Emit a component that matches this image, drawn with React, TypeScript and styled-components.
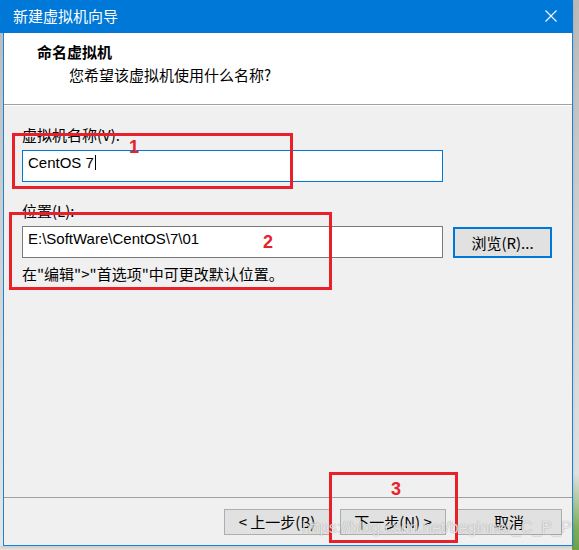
import React from "react";
import styled, { createGlobalStyle } from "styled-components";

// ------------------------------------------------
// Style
// ------------------------------------------------

const Global = createGlobalStyle`
  body {
    margin: 0;
    font-family: "Noto Sans CJK SC", "Liberation Sans", sans-serif;
  }
`;

const Page = styled.div`
  position: relative;
  width: 579px;
  height: 550px;
  overflow: hidden;
  background:
    linear-gradient(to bottom, transparent 0%, transparent 86%, #7fae5a 96%, #6da249 100%) right / 7px 100% no-repeat,
    linear-gradient(to bottom, #b9b9b9 0%, #cfcfcf 40%, #e6e6e6 100%);
`;

const Window = styled.div`
  width: 573px;
  height: 546px;
  display: flex;
  flex-direction: column;
  box-shadow: 0 2px 3px rgba(0, 0, 0, 0.12);
`;

const TitleBar = styled.div`
  height: 33px;
  flex: none;
  display: flex;
  align-items: center;
  justify-content: space-between;
  padding: 0 16px 2px 13px;
  box-sizing: border-box;
  background: #0078d7;
  color: #fff;
  font-size: 15px;
  line-height: 20px;
`;

const Frame = styled.div`
  flex: 1;
  display: flex;
  flex-direction: column;
  margin-left: 3px;
  border: 1px solid #1883d7;
  border-top: none;
  background: #f0f0f0;
`;

const Header = styled.div`
  height: 72px;
  flex: none;
  box-sizing: border-box;
  padding: 9px 0 0 33px;
  background: #fff;
  border-bottom: 1px solid #a0a0a0;
`;

const HeaderTitle = styled.div`
  font-size: 15px;
  line-height: 20px;
  font-weight: 700;
  color: #000;
`;

const HeaderSub = styled.div`
  margin: 3px 0 0 32px;
  font-size: 15px;
  line-height: 20px;
  color: #000;
`;

const Content = styled.div`
  flex: 1;
  padding: 19px 0 0 18px;
  border-top: 1px solid #fff;
`;

const Label = styled.div<{ $gap?: number }>`
  margin-top: ${(p) => p.$gap ?? 0}px;
  margin-bottom: 5px;
  font-size: 15px;
  line-height: 20px;
  color: #000;
`;

const Row = styled.div`
  display: flex;
  align-items: flex-start;
  gap: 10px;
`;

const TextBox = styled.div<{ $focused?: boolean }>`
  width: 421px;
  height: 32px;
  box-sizing: border-box;
  padding: 2px 5px 0;
  display: flex;
  align-items: flex-start;
  background: #fff;
  border: 1px solid ${(p) => (p.$focused ? "#0078d7" : "#7a7a7a")};
  font-family: "Liberation Sans", sans-serif;
  font-size: 15px;
  line-height: 20px;
  color: #000;
`;

const Caret = styled.span`
  width: 1px;
  height: 15px;
  margin: 2px 0 0 1px;
  background: #000;
`;

const Browse = styled.button`
  width: 99px;
  height: 31px;
  margin-top: 1px;
  padding: 0;
  background: #e1e1e1;
  border: 2px solid #0078d7;
  font-family: "Noto Sans CJK SC", "Liberation Sans", sans-serif;
  font-size: 15px;
  line-height: 20px;
  color: #000;
`;

const Hint = styled.div`
  margin-top: 6px;
  font-size: 15px;
  line-height: 20px;
  color: #000;
`;

const Footer = styled.div`
  flex: none;
  display: flex;
  justify-content: flex-end;
  gap: 10px;
  padding: 11px 10px 10px;
  border-top: 1px solid #a0a0a0;
`;

const WizButton = styled.button`
  width: 106px;
  height: 26px;
  padding: 0;
  background: #e1e1e1;
  border: 1px solid #adadad;
  font-family: "Noto Sans CJK SC", "Liberation Sans", sans-serif;
  font-size: 15px;
  line-height: 20px;
  color: #000;
`;

// annotation overlays drawn on top of the screenshot
const Mark = styled.div<{ $x: number; $y: number; $w: number; $h: number }>`
  position: absolute;
  left: ${(p) => p.$x}px;
  top: ${(p) => p.$y}px;
  width: ${(p) => p.$w}px;
  height: ${(p) => p.$h}px;
  box-sizing: border-box;
  border: 3px solid #e8202a;
  pointer-events: none;
`;

const MarkNum = styled.div<{ $x: number; $y: number }>`
  position: absolute;
  left: ${(p) => p.$x}px;
  top: ${(p) => p.$y}px;
  transform: translate(-50%, -50%);
  font-family: "Liberation Sans", sans-serif;
  font-weight: 700;
  font-size: 18px;
  line-height: 18px;
  color: #e8202a;
`;

const Watermark = styled.div`
  position: absolute;
  left: 302px;
  top: 518px;
  font-family: "Liberation Sans", sans-serif;
  font-size: 16px;
  line-height: 20px;
  color: rgba(255, 255, 255, 0.8);
  text-shadow: 0 0 1px rgba(0, 0, 0, 0.45);
  white-space: nowrap;
  pointer-events: none;
`;

// ------------------------------------------------
// View
// ------------------------------------------------

const CloseIcon = () => (
  <svg width="12" height="12" viewBox="0 0 12 12">
    <path d="M0.5 0.5 L11.5 11.5 M11.5 0.5 L0.5 11.5" stroke="#fff" strokeWidth="1.1" />
  </svg>
);

const App = () => {
  return (
    <Page>
      <Global />
      <Window>
        <TitleBar>
          <span>新建虚拟机向导</span>
          <CloseIcon />
        </TitleBar>
        <Frame>
          <Header>
            <HeaderTitle>命名虚拟机</HeaderTitle>
            <HeaderSub>您希望该虚拟机使用什么名称?</HeaderSub>
          </Header>
          <Content>
            <Label>虚拟机名称(V):</Label>
            <TextBox $focused>
              CentOS 7
              <Caret />
            </TextBox>
            <Label $gap={19}>位置(L):</Label>
            <Row>
              <TextBox>E:\SoftWare\CentOS\7\01</TextBox>
              <Browse>浏览(R)...</Browse>
            </Row>
            <Hint>在"编辑"&gt;"首选项"中可更改默认位置。</Hint>
          </Content>
          <Footer>
            <WizButton>&lt; 上一步(B)</WizButton>
            <WizButton>下一步(N) &gt;</WizButton>
            <WizButton>取消</WizButton>
          </Footer>
        </Frame>
      </Window>

      <Mark $x={12} $y={133} $w={281} $h={56} />
      <MarkNum $x={134} $y={147}>1</MarkNum>
      <Mark $x={9} $y={212} $w={323} $h={78} />
      <MarkNum $x={268} $y={242}>2</MarkNum>
      <Mark $x={329} $y={472} $w={129} $h={71} />
      <MarkNum $x={396} $y={489}>3</MarkNum>
      <Watermark>https://blog.csdn.net/beginner_C_P_P</Watermark>
    </Page>
  );
};

export default App;
